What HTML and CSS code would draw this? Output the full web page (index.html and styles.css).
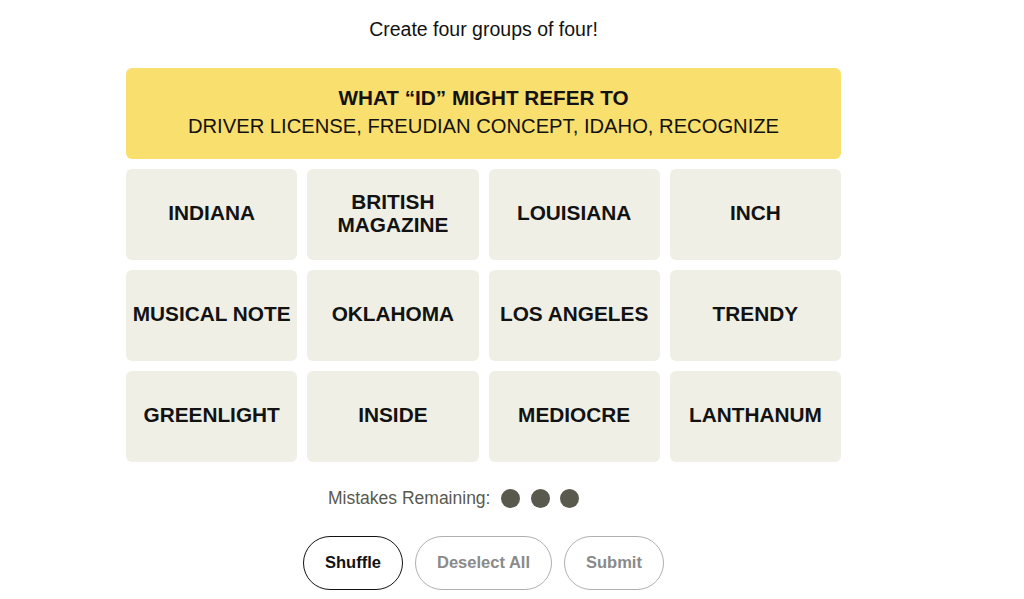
FILE: index.html
```html
<!DOCTYPE html>
<html lang="en">
<head>
<meta charset="utf-8">
<link rel="stylesheet" href="styles.css">
</head>
<body>
<main class="page">
  <p class="intro">Create four groups of four!</p>
  <section class="board">
    <div class="solved">
      <h3 class="solved-title">WHAT “ID” MIGHT REFER TO</h3>
      <p class="solved-words">DRIVER LICENSE, FREUDIAN CONCEPT, IDAHO, RECOGNIZE</p>
    </div>
    <div class="grid">
      <div class="tile">INDIANA</div>
      <div class="tile">BRITISH MAGAZINE</div>
      <div class="tile">LOUISIANA</div>
      <div class="tile">INCH</div>
      <div class="tile">MUSICAL NOTE</div>
      <div class="tile">OKLAHOMA</div>
      <div class="tile">LOS ANGELES</div>
      <div class="tile">TRENDY</div>
      <div class="tile">GREENLIGHT</div>
      <div class="tile">INSIDE</div>
      <div class="tile">MEDIOCRE</div>
      <div class="tile">LANTHANUM</div>
    </div>
  </section>
  <div class="mistakes">
    <span class="mistakes-label">Mistakes Remaining:</span>
    <span class="dots"><span class="dot"></span><span class="dot"></span><span class="dot"></span><span class="dot dot-lost"></span></span>
  </div>
  <div class="actions">
    <button class="btn btn-active">Shuffle</button>
    <button class="btn btn-disabled btn-wide">Deselect All</button>
    <button class="btn btn-disabled">Submit</button>
  </div>
</main>
</body>
</html>
```
FILE: styles.css
```css
* { box-sizing: border-box; }
html, body { margin: 0; padding: 0; background: #fff; }
body {
  font-family: "Liberation Sans", Arial, sans-serif;
  color: #000;
}
.page {
  width: 967px;
  display: flex;
  flex-direction: column;
  align-items: center;
  padding-top: 17px;
}
.intro {
  margin: 0;
  font-size: 19.5px;
  line-height: 24px;
  color: #121212;
}
.board {
  width: 715px;
  margin-top: 27px;
  display: flex;
  flex-direction: column;
  gap: 10px;
}
.solved {
  height: 91px;
  background: #f9df6d;
  border-radius: 6px;
  display: flex;
  flex-direction: column;
  align-items: center;
  justify-content: center;
  gap: 4px;
  padding-bottom: 3px;
  color: #121212;
}
.solved-title {
  margin: 0;
  font-size: 20.7px;
  line-height: 25px;
  font-weight: 700;
}
.solved-words {
  margin: 0;
  font-size: 20.2px;
  line-height: 25px;
  font-weight: 400;
}
.grid {
  display: grid;
  grid-template-columns: repeat(4, minmax(0, 1fr));
  grid-auto-rows: 91px;
  gap: 10px;
}
.tile {
  background: #efefe6;
  border-radius: 6px;
  display: flex;
  align-items: center;
  justify-content: center;
  text-align: center;
  font-size: 20.8px;
  line-height: 23px;
  font-weight: 700;
  padding: 0 4px 4px;
  color: #121212;
}
.mistakes {
  margin-top: 26px;
  margin-right: 30px;
  display: flex;
  align-items: center;
  gap: 11px;
}
.mistakes-label {
  font-size: 17.5px;
  color: #5a594e;
}
.dots { display: flex; gap: 10.5px; }
.dot {
  width: 19px;
  height: 19px;
  border-radius: 50%;
  background: #5a594e;
}
.dot-lost { visibility: hidden; }
.actions {
  margin-top: 27px;
  display: flex;
  gap: 12px;
}
.btn {
  height: 54px;
  width: 100px;
  border-radius: 27px;
  background: #fff;
  font-family: "Liberation Sans", Arial, sans-serif;
  font-size: 16.5px;
  font-weight: 700;
  padding: 0 0 2px;
}
.btn-wide { width: 137px; }
.btn-active { border: 1px solid #121212; color: #121212; }
.btn-disabled { border: 1px solid #b0b0b0; color: #8a8a8a; }
```
